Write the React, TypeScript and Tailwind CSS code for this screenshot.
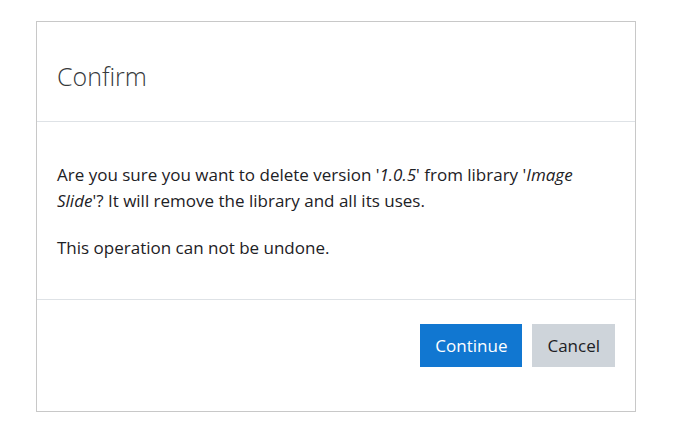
export default function App() {
  return (
    <div className="min-h-screen bg-white pt-[21px] pl-[36px] font-['Open_Sans',sans-serif] text-[#1d2125]">
      <div className="flex h-[391px] w-[600px] flex-col border border-[#c8c8c8] bg-white">
        <div className="flex h-[100px] items-center border-b border-[#dee2e6] px-[20px] pt-[10px]">
          <h5 className="text-[25px] font-light text-[#373a3c]">Confirm</h5>
        </div>
        <div className="h-[178px] border-b border-[#dee2e6] px-[20px] pt-[40px] text-[17px] leading-[26px]">
          <p className="mb-[21px]">
            Are you sure you want to delete version '<em>1.0.5</em>' from library '<em>Image Slide</em>'? It will remove
            the library and all its uses.
          </p>
          <p>This operation can not be undone.</p>
        </div>
        <div className="flex justify-end gap-[10px] px-[20px] pt-[24px]">
          <button className="h-[43px] bg-[#1177d1] px-[15px] text-[17px] text-white">Continue</button>
          <button className="h-[43px] bg-[#ced4da] px-[15px] text-[17px] text-[#1d2125]">Cancel</button>
        </div>
      </div>
    </div>
  );
}
